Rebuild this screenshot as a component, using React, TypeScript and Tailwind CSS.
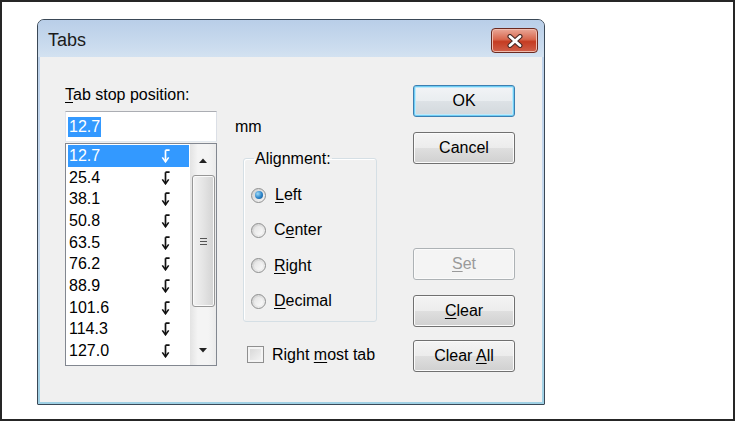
import React from "react";

const TabIcon = ({ white }: { white?: boolean }) => {
  const c = white ? "#ffffff" : "#111111";
  return (
    <svg width="10" height="14" viewBox="0 0 10 14" className="block">
      <path d="M4.5 1.2 V12.4 M4.5 1.2 H8.6" stroke={c} strokeWidth="1.7" fill="none" />
      <path d="M1.3 8.4 L4.5 12.8 L7.7 8.4" stroke={c} strokeWidth="1.6" fill="none" />
    </svg>
  );
};

const Radio = ({ checked }: { checked?: boolean }) => (
  <span className="w-[15px] h-[15px] shrink-0 rounded-full border border-[#8e8f8f] bg-[linear-gradient(135deg,#cfcfcf,#f6f6f6)] flex items-center justify-center">
    {checked ? (
      <span className="w-[8px] h-[8px] rounded-full bg-[radial-gradient(circle_at_35%_35%,#9edbf8,#2b83c8_55%,#155089)]" />
    ) : (
      <span className="w-[9px] h-[9px] rounded-full bg-[linear-gradient(135deg,#e2e2e2,#fbfbfb)]" />
    )}
  </span>
);

const Btn = ({
  children,
  def,
  disabled,
}: {
  children: React.ReactNode;
  def?: boolean;
  disabled?: boolean;
}) => {
  const base =
    "w-[102px] h-[32px] rounded-[3px] border flex items-center justify-center text-[16px] leading-[18px]";
  if (disabled)
    return (
      <div className={base + " border-[#adb2b5] bg-[#f4f4f4] text-[#9a9a9a] shadow-[inset_0_0_0_1px_#fbfbfb]"}>
        <span>{children}</span>
      </div>
    );
  if (def)
    return (
      <div
        className={
          base +
          " border-[#3c7fb1] bg-[linear-gradient(#f2f4f6,#e9edf0_50%,#dde2e6_50%,#d2d8dc)] shadow-[inset_0_0_0_1px_#6fcdf4,inset_0_0_0_2px_#bfe9fb] text-black"
        }
      >
        <span>{children}</span>
      </div>
    );
  return (
    <div
      className={
        base +
        " border-[#707070] bg-[linear-gradient(#f4f4f4,#ececec_50%,#dfdfdf_50%,#d0d0d0)] shadow-[inset_0_0_0_1px_#fbfbfb] text-black"
      }
    >
      <span>{children}</span>
    </div>
  );
};

const rows = ["12.7", "25.4", "38.1", "50.8", "63.5", "76.2", "88.9", "101.6", "114.3", "127.0"];

const U = ({ children }: { children: React.ReactNode }) => (
  <span className="underline underline-offset-[2px] decoration-1">{children}</span>
);

export default function App() {
  return (
    <div className="w-[735px] h-[421px] border-2 border-[#262626] bg-white pl-[35px] pt-[17px] font-['Liberation_Sans',Arial,sans-serif] text-black">
      <div className="w-[508px] h-[386px] border border-[#3a4856] rounded-t-[7px] rounded-b-[1px] overflow-hidden flex flex-col bg-[linear-gradient(#bcd1ea,#c8daee_60%,#9fd0e4)]">
        {/* Title bar */}
        <div className="h-[37px] shrink-0 flex items-start justify-between pl-[10px] pr-[6px] bg-[linear-gradient(#b9cee8,#cadbee_70%,#d3e2f1)]">
          <span className="mt-[10px] text-[18px] leading-[20px] text-[#1b1b1b]">Tabs</span>
          <div className="mt-[8px] w-[47px] h-[25px] rounded-[4px] border border-[#6b2a20] bg-[linear-gradient(#eaa898,#d8674e_45%,#c53c22_55%,#d0604a)] shadow-[inset_0_0_0_1px_#f0bcae] flex items-center justify-center">
            <svg width="18" height="14" viewBox="0 0 18 14">
              <path d="M4 2.5 L14 11.5 M14 2.5 L4 11.5" stroke="#4a2a26" strokeWidth="5" strokeLinecap="round" />
              <path d="M4 2.5 L14 11.5 M14 2.5 L4 11.5" stroke="#ffffff" strokeWidth="2.8" strokeLinecap="round" />
            </svg>
          </div>
        </div>
        {/* Content */}
        <div className="mx-[2px] mb-[2px] flex-1 bg-[#f0f0f0] flex pl-[25px] text-[16px] leading-[18px]">
          {/* Left column */}
          <div className="w-[152px] flex flex-col">
            <div className="mt-[28.5px] h-[18px]">
              <U>T</U>ab stop position:
            </div>
            <div className="mt-[7.5px] h-[31px] bg-white border border-[#abadb3] border-b-[#e3e9ef] border-l-[#e2e3ea] border-r-[#dbdfe6] flex items-center pl-[2px]">
              <span className="bg-[#3399ff] text-white h-[20px] leading-[20px] px-[1px]">12.7</span>
            </div>
            <div className="mt-[1px] h-[223px] bg-white border border-[#828790] flex">
              <div className="flex-1 pt-[1px] pl-[2px] pr-[1px]">
                {rows.map((r, i) => (
                  <div
                    key={r}
                    className={
                      "h-[21.7px] flex items-center pl-[1px] " +
                      (i === 0 ? "bg-[#3399ff] text-white" : "")
                    }
                  >
                    <span className="w-[92px]">{r}</span>
                    <TabIcon white={i === 0} />
                  </div>
                ))}
              </div>
              <div className="w-[26px] flex flex-col bg-[linear-gradient(90deg,#e3e3e3,#f4f4f4_30%,#f4f4f4_70%,#ebebeb)]">
                <div className="h-[29px] flex items-center justify-center pt-[3px]">
                  <svg width="8" height="5" viewBox="0 0 8 5">
                    <path d="M0 5 L4 0.5 L8 5 Z" fill="#222" />
                  </svg>
                </div>
                <div className="mt-[2px] mx-[1.5px] h-[132px] rounded-[3px] border border-[#979797] bg-[linear-gradient(90deg,#f2f2f2,#e4e4e4_50%,#d3d3d3)] shadow-[inset_0_0_0_1px_#fafafa] flex flex-col items-center justify-center gap-[2px]">
                  <span className="w-[7px] h-[1px] bg-[#555]" />
                  <span className="w-[7px] h-[1px] bg-[#555]" />
                  <span className="w-[7px] h-[1px] bg-[#555]" />
                </div>
                <div className="flex-1" />
                <div className="h-[29px] flex items-center justify-center pb-[1px]">
                  <svg width="8" height="5" viewBox="0 0 8 5">
                    <path d="M0 0 L8 0 L4 4.5 Z" fill="#222" />
                  </svg>
                </div>
              </div>
            </div>
          </div>
          {/* Middle column */}
          <div className="w-[196px] flex flex-col">
            <div className="mt-[60.5px] pl-[18px] h-[18px]">mm</div>
            <fieldset className="mt-[14px] ml-[26px] w-[134px] border border-[#d5dfe5] rounded-[3px] pb-[2px] shadow-[inset_1px_1px_0_#ffffff]">
              <legend className="ml-[10px] px-[1px] leading-[18px]">Alignment:</legend>
              <div className="mt-[10px] flex flex-col pl-[7px]">
                <div className="h-[35.3px] flex items-center gap-[9px]">
                  <Radio checked />
                  <span>
                    <U>L</U>eft
                  </span>
                </div>
                <div className="h-[35.3px] flex items-center gap-[8px]">
                  <Radio />
                  <span>
                    C<U>e</U>nter
                  </span>
                </div>
                <div className="h-[35.3px] flex items-center gap-[8px]">
                  <Radio />
                  <span>
                    <U>R</U>ight
                  </span>
                </div>
                <div className="h-[35.3px] flex items-center gap-[8px]">
                  <Radio />
                  <span>
                    <U>D</U>ecimal
                  </span>
                </div>
              </div>
            </fieldset>
            <div className="mt-[24px] ml-[30px] h-[18px] flex items-center gap-[8px]">
              <span className="w-[17px] h-[17px] shrink-0 border border-[#8f8f8f] bg-[linear-gradient(135deg,#d4d4d4,#f7f7f7)] shadow-[inset_0_0_0_2px_#f4f4f4]" />
              <span>
                Right <U>m</U>ost tab
              </span>
            </div>
          </div>
          {/* Right column */}
          <div className="w-[102px] flex flex-col">
            <div className="mt-[28px]">
              <Btn def>OK</Btn>
            </div>
            <div className="mt-[15px]">
              <Btn>Cancel</Btn>
            </div>
            <div className="mt-[84px]">
              <Btn disabled>
                <U>S</U>et
              </Btn>
            </div>
            <div className="mt-[15px]">
              <Btn>
                <U>C</U>lear
              </Btn>
            </div>
            <div className="mt-[13px]">
              <Btn>
                Clear <U>A</U>ll
              </Btn>
            </div>
          </div>
        </div>
      </div>
    </div>
  );
}
